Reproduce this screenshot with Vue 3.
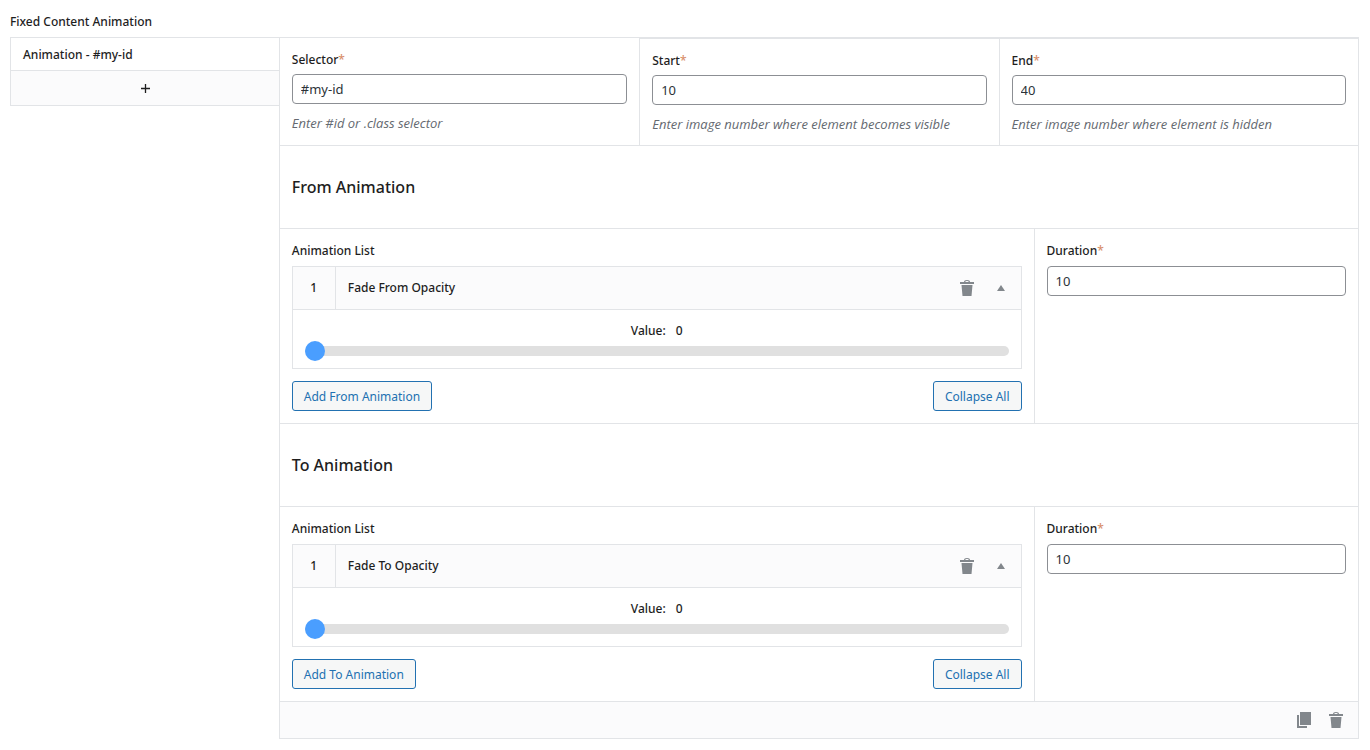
<script setup>
import { ref, reactive } from 'vue'

const limits = reactive([
  { id: 'selector', label: 'Selector', value: '#my-id', hint: 'Enter #id or .class selector' },
  { id: 'start', label: 'Start', value: '10', hint: 'Enter image number where element becomes visible' },
  { id: 'end', label: 'End', value: '40', hint: 'Enter image number where element is hidden' }
])

const sections = reactive([
  { id: 'from', title: 'From Animation', item: 'Fade From Opacity', add: 'Add From Animation', value: 0, duration: '10', open: true },
  { id: 'to', title: 'To Animation', item: 'Fade To Opacity', add: 'Add To Animation', value: 0, duration: '10', open: true }
])

const active = ref(0)
</script>

<template>
  <main class="field">
    <h1 class="field-title">Fixed Content Animation</h1>
    <div class="group">
      <nav class="tabs" aria-label="Animations">
        <button type="button" class="tab" :aria-pressed="active === 0" @click="active = 0">Animation - #my-id</button>
        <button type="button" class="tab add" aria-label="Add animation">
          <svg width="9" height="9" viewBox="0 0 9 9" aria-hidden="true">
            <path d="M4.5 0v9M0 4.5h9" stroke="#1e1e1e" stroke-width="1.3" fill="none" />
          </svg>
        </button>
      </nav>

      <div class="panel">
        <div class="row limits">
          <div v-for="f in limits" :key="f.id" class="cell">
            <label :for="f.id" class="label">{{ f.label }}<span class="req">*</span></label>
            <input :id="f.id" v-model="f.value" class="text" type="text" required />
            <em class="hint">{{ f.hint }}</em>
          </div>
        </div>

        <template v-for="s in sections" :key="s.id">
          <div class="row heading"><h2>{{ s.title }}</h2></div>
          <div class="row body">
            <div class="cell list">
              <span class="label">Animation List</span>
              <div class="entry">
                <div class="entry-head">
                  <span class="index">1</span>
                  <span class="name">{{ s.item }}</span>
                  <button type="button" class="icon" aria-label="Remove">
                    <svg width="14" height="16" viewBox="0 0 14 16" aria-hidden="true">
                      <path fill="#82878c" fill-rule="evenodd" d="M4 2C4 .7 5 0 7 0s3 .7 3 2h4v2H0V2zm1.300 0h3.400C8.700 1.300 8.200 1 7 1s-1.700.3-1.700 1zM1.500 5h11l-1 11h-9z" />
                    </svg>
                  </button>
                  <button type="button" class="icon" aria-label="Collapse" @click="s.open = !s.open">
                    <svg width="8" height="6" viewBox="0 0 8 6" aria-hidden="true">
                      <path fill="#82878c" d="M4 0l4 6H0z" />
                    </svg>
                  </button>
                </div>
                <div v-if="s.open" class="entry-body">
                  <label :for="s.id + '-value'" class="value"><span>Value:</span><span>{{ s.value }}</span></label>
                  <input :id="s.id + '-value'" v-model="s.value" class="slider" type="range" min="0" max="1" step="0.1" />
                </div>
              </div>
              <div class="actions">
                <button type="button" class="btn">{{ s.add }}</button>
                <button type="button" class="btn" @click="s.open = false">Collapse All</button>
              </div>
            </div>
            <div class="cell duration">
              <label :for="s.id + '-duration'" class="label">Duration<span class="req">*</span></label>
              <input :id="s.id + '-duration'" v-model="s.duration" class="text" type="text" required />
            </div>
          </div>
        </template>

        <footer class="foot">
          <button type="button" class="icon" aria-label="Duplicate">
            <svg width="14" height="16" viewBox="0 0 14 16" aria-hidden="true">
              <path fill="#82878c" d="M3 0h11v13H3zM0 3h2v11h8v2H0z" />
            </svg>
          </button>
          <button type="button" class="icon" aria-label="Remove">
            <svg width="14" height="16" viewBox="0 0 14 16" aria-hidden="true">
              <path fill="#82878c" fill-rule="evenodd" d="M4 2C4 .7 5 0 7 0s3 .7 3 2h4v2H0V2zm1.300 0h3.400C8.700 1.300 8.200 1 7 1s-1.700.3-1.700 1zM1.500 5h11l-1 11h-9z" />
            </svg>
          </button>
        </footer>
      </div>
    </div>
  </main>
</template>

<style>
body {
  margin: 0;
  background: #fff;
}
</style>

<style scoped>
* {
  box-sizing: border-box;
}
.field {
  padding: 13px 11px 12px 10px;
  font-family: "Noto Sans", "Open Sans", sans-serif;
  font-size: 12px;
  line-height: 18px;
  color: #1e1e1e;
}
button,
input {
  font-family: inherit;
  margin: 0;
}
button {
  cursor: pointer;
}
.field-title {
  margin: 0 0 6px;
  font-size: 12px;
  font-weight: 500;
  line-height: 18px;
}
.group {
  display: grid;
  grid-template-columns: 1fr 4fr;
  align-items: start;
}
.tabs {
  display: flex;
  flex-direction: column;
  border: 1px solid #e2e4e7;
  border-right: 0;
}
.tab {
  height: 32px;
  padding: 0 12px;
  border: 0;
  background: #fff;
  color: inherit;
  font-size: 12px;
  font-weight: 500;
  text-align: left;
}
.tab.add {
  display: flex;
  align-items: center;
  justify-content: center;
  height: 35px;
  border-top: 1px solid #e2e4e7;
  background: #fbfbfc;
}
.panel {
  margin-left: -1px;
  border: 1px solid #e2e4e7;
  border-left: 0;
}
.row {
  display: grid;
  border-left: 1px solid #e2e4e7;
  border-bottom: 1px solid #e2e4e7;
}
.limits {
  grid-template-columns: repeat(3, 1fr);
}
.cell {
  display: flex;
  flex-direction: column;
  min-width: 0;
  padding: 13px 12px 12px;
}
.limits .cell + .cell {
  border-top: 1px solid #e2e4e7;
  border-left: 1px solid #e2e4e7;
}
.cell.list {
  border-right: 1px solid #e2e4e7;
}
.label {
  margin-bottom: 5px;
  font-weight: 500;
}
.body .label {
  margin-bottom: 6px;
}
.req {
  color: #d9906c;
}
.text {
  width: 100%;
  height: 30px;
  padding: 0 8px;
  border: 1px solid #8c8f94;
  border-radius: 4px;
  background: #fff;
  color: #2c3338;
  font-size: 13px;
}
.hint {
  margin-top: 10px;
  color: #646970;
  font-family: "Open Sans", "Noto Sans", sans-serif;
  font-size: 13px;
}
.heading {
  height: 83px;
  padding: 0 12px;
  align-items: center;
}
h2 {
  margin: 0;
  font-size: 16px;
  font-weight: 500;
  line-height: 24px;
}
.body {
  grid-template-columns: 7fr 3fr;
}
.entry {
  border: 1px solid #e2e4e7;
}
.entry-head {
  display: flex;
  align-items: center;
  height: 43px;
  padding-right: 3px;
  border-bottom: 1px solid #e2e4e7;
  background: #fbfbfc;
  font-weight: 500;
}
.index {
  display: grid;
  place-items: center;
  align-self: stretch;
  width: 43px;
  border-right: 1px solid #e2e4e7;
}
.name {
  flex: 1;
  padding: 0 12px;
}
.icon {
  display: grid;
  place-items: center;
  width: 34px;
  height: 34px;
  padding: 0;
  border: 0;
  background: transparent;
}
.entry-body {
  padding: 12px;
}
.value {
  display: flex;
  justify-content: center;
  gap: 10px;
  height: 18px;
  font-weight: 500;
}
.slider {
  -webkit-appearance: none;
  appearance: none;
  display: block;
  width: 100%;
  height: 10px;
  margin: 6px 0 0;
  border-radius: 5px;
  background: #e0e0e0;
}
.slider::-webkit-slider-thumb {
  -webkit-appearance: none;
  appearance: none;
  width: 20px;
  height: 20px;
  border-radius: 50%;
  background: #4a9eff;
}
.actions {
  display: flex;
  justify-content: space-between;
  margin-top: 12px;
}
.btn {
  height: 30px;
  padding: 0 11px;
  border: 1px solid #2271b1;
  border-radius: 3px;
  background: #f6f7f7;
  color: #2271b1;
  font-size: 12px;
}
.foot {
  display: flex;
  justify-content: flex-end;
  align-items: center;
  height: 36px;
  padding-right: 6px;
  border-left: 1px solid #e2e4e7;
  background: #fbfbfc;
}
.foot .icon {
  width: 32px;
}
</style>
